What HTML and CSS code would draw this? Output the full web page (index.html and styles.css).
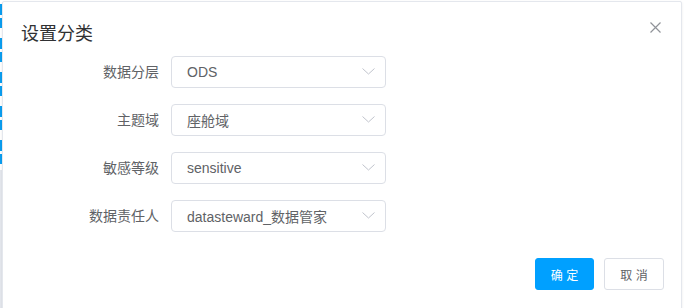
FILE: index.html
```html
<!DOCTYPE html>
<html lang="zh-CN">
<head>
    <meta charset="UTF-8">
    <meta name="viewport" content="width=device-width, initial-scale=1.0">
    <title>设置分类</title>
    <link rel="stylesheet" href="styles.css">
</head>
<body>
    <div class="dialog">
        <div class="dialog-header">
            <span class="dialog-title">设置分类</span>
            <button class="dialog-close" aria-label="关闭">
                <svg width="11" height="11" viewBox="0 0 11 11">
                    <path d="M0.5 0.5 L10.5 10.5 M10.5 0.5 L0.5 10.5" stroke="#909399" stroke-width="1.2" fill="none"/>
                </svg>
            </button>
        </div>

        <div class="dialog-body">
            <div class="form-item">
                <label class="form-label">数据分层</label>
                <div class="select">
                    <span class="select-value">ODS</span>
                    <svg class="select-arrow" width="13" height="7" viewBox="0 0 13 7"><polyline points="0.5,0.5 6.5,6 12.5,0.5" stroke="#c0c4cc" stroke-width="1" fill="none"/></svg>
                </div>
            </div>
            <div class="form-item">
                <label class="form-label">主题域</label>
                <div class="select">
                    <span class="select-value">座舱域</span>
                    <svg class="select-arrow" width="13" height="7" viewBox="0 0 13 7"><polyline points="0.5,0.5 6.5,6 12.5,0.5" stroke="#c0c4cc" stroke-width="1" fill="none"/></svg>
                </div>
            </div>
            <div class="form-item">
                <label class="form-label">敏感等级</label>
                <div class="select">
                    <span class="select-value">sensitive</span>
                    <svg class="select-arrow" width="13" height="7" viewBox="0 0 13 7"><polyline points="0.5,0.5 6.5,6 12.5,0.5" stroke="#c0c4cc" stroke-width="1" fill="none"/></svg>
                </div>
            </div>
            <div class="form-item">
                <label class="form-label">数据责任人</label>
                <div class="select">
                    <span class="select-value">datasteward_数据管家</span>
                    <svg class="select-arrow" width="13" height="7" viewBox="0 0 13 7"><polyline points="0.5,0.5 6.5,6 12.5,0.5" stroke="#c0c4cc" stroke-width="1" fill="none"/></svg>
                </div>
            </div>
        </div>

        <div class="dialog-footer">
            <button class="btn btn-primary">确 定</button>
            <button class="btn btn-default">取 消</button>
        </div>
    </div>
</body>
</html>
```

FILE: styles.css
```css
body {
    margin: 0;
    height: 308px;
    overflow: hidden;
    font-family: "Helvetica Neue", "Liberation Sans", "Noto Sans CJK SC", sans-serif;
    background-color: #ffffff;
    /* page behind the dialog, only a sliver shows on the left */
    background-image:
        linear-gradient(to right, transparent 2px, #ffffff 2px),
        linear-gradient(to bottom, transparent 170px, #e4e7ed 170px),
        repeating-linear-gradient(to bottom, #ffffff 0 4px, #0a9ef0 4px 15px, #ffffff 15px 18px, #0a9ef0 18px 28px, #ffffff 28px 34px);
}

.dialog {
    position: relative;
    margin: 1px 0 0 2px;
    width: 678px;
    height: 320px;
    background: #ffffff;
    border: 1px solid #e4e7ed;
    border-radius: 2px;
    box-shadow: 0 1px 3px rgba(0, 0, 0, 0.08);
}

.dialog-header {
    padding: 20px 18px 10px;
}

.dialog-title {
    display: block;
    font-size: 18px;
    line-height: 24px;
    color: #303133;
}

.dialog-close {
    position: absolute;
    top: 20px;
    right: 20px;
    padding: 0;
    border: none;
    background: none;
    line-height: 0;
    cursor: pointer;
}

.dialog-body {
    padding: 0 18px;
}

.form-item {
    display: flex;
    margin-bottom: 16px;
}

.form-label {
    width: 150px;
    padding-right: 12px;
    box-sizing: border-box;
    text-align: right;
    font-size: 14px;
    line-height: 32px;
    color: #606266;
}

.select {
    display: flex;
    align-items: center;
    justify-content: space-between;
    width: 215px;
    height: 32px;
    box-sizing: border-box;
    padding: 0 10px 0 15px;
    border: 1px solid #dcdfe6;
    border-radius: 4px;
    font-size: 14px;
    color: #606266;
}

.select-arrow {
    margin-top: -2px;
}

.dialog-footer {
    display: flex;
    justify-content: flex-end;
    gap: 10px;
    padding: 10px 17px 0;
}

.btn {
    width: 60px;
    height: 32px;
    border-radius: 3px;
    font-family: inherit;
    font-size: 12px;
    cursor: pointer;
}

.btn-primary {
    width: 59px;
    background-color: #00a0ff;
    border: 1px solid #00a0ff;
    color: #ffffff;
}

.btn-default {
    background-color: #ffffff;
    border: 1px solid #dcdfe6;
    color: #606266;
}
```
